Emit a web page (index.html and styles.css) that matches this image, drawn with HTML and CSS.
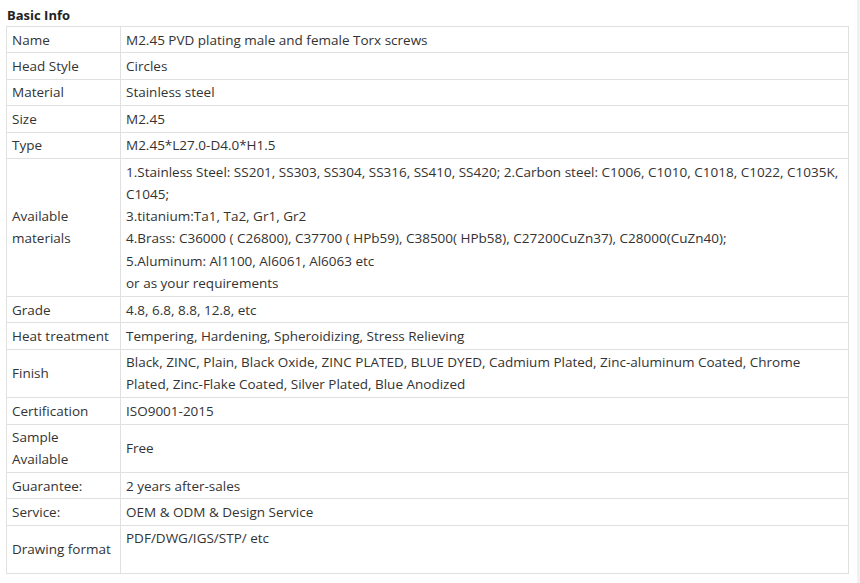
FILE: index.html
```html
<!DOCTYPE html>
<html lang="en">
<head>
<meta charset="utf-8">
<title>Basic Info</title>
<link rel="stylesheet" href="styles.css">
</head>
<body>
<div class="page">
  <div class="content">
    <h3 class="title">Basic Info</h3>
    <table class="spec">
      <tbody>
        <tr><td class="k">Name</td><td class="v">M2.45 PVD plating male and female Torx screws</td></tr>
        <tr><td class="k">Head Style</td><td class="v">Circles</td></tr>
        <tr><td class="k">Material</td><td class="v">Stainless steel</td></tr>
        <tr><td class="k">Size</td><td class="v">M2.45</td></tr>
        <tr><td class="k">Type</td><td class="v">M2.45*L27.0-D4.0*H1.5</td></tr>
        <tr class="tall"><td class="k">Available materials</td><td class="v">1.Stainless Steel: SS201, SS303, SS304, SS316, SS410, SS420; 2.Carbon steel: C1006, C1010, C1018, C1022, C1035K, C1045;<br>3.titanium:Ta1, Ta2, Gr1, Gr2<br>4.Brass: C36000 ( C26800), C37700 ( HPb59), C38500( HPb58), C27200CuZn37), C28000(CuZn40);<br>5.Aluminum: Al1100, Al6061, Al6063 etc<br>or as your requirements</td></tr>
        <tr><td class="k">Grade</td><td class="v">4.8, 6.8, 8.8, 12.8, etc</td></tr>
        <tr><td class="k">Heat treatment</td><td class="v">Tempering, Hardening, Spheroidizing, Stress Relieving</td></tr>
        <tr><td class="k">Finish</td><td class="v">Black, ZINC, Plain, Black Oxide, ZINC PLATED, BLUE DYED, Cadmium Plated, Zinc-aluminum Coated, Chrome Plated, Zinc-Flake Coated, Silver Plated, Blue Anodized</td></tr>
        <tr><td class="k">Certification</td><td class="v">ISO9001-2015</td></tr>
        <tr><td class="k">Sample Available</td><td class="v">Free</td></tr>
        <tr><td class="k">Guarantee:</td><td class="v">2 years after-sales</td></tr>
        <tr><td class="k">Service:</td><td class="v">OEM &amp; ODM &amp; Design Service</td></tr>
        <tr><td class="k">Drawing format</td><td class="v top">PDF/DWG/IGS/STP/ etc<br>&nbsp;</td></tr>
      </tbody>
    </table>
  </div>
  <div class="scroll"></div>
</div>
</body>
</html>
```
FILE: styles.css
```css
html, body {
  margin: 0;
  padding: 0;
  background: #ffffff;
}
body {
  font-family: "Open Sans", "Noto Sans", sans-serif;
  color: #333333;
}
.page {
  display: flex;
  width: 860px;
  height: 583px;
}
.content {
  flex: 1;
  padding: 6px 0 0 6px;
}
.title {
  margin: 0;
  font-size: 13px;
  font-weight: 700;
  line-height: 18px;
  color: #222222;
  padding-left: 1px;
  height: 20px;
}
.spec {
  border-collapse: collapse;
  width: 843px;
  font-size: 13.5px;
  line-height: 22px;
  border: 1px solid #cfcfcf;
}
.spec td {
  border: 1px solid #e0e0e0;
  padding: 1.7px 5px;
  vertical-align: middle;
}
.spec .tall td {
  line-height: 22.3px;
}
.spec .k {
  width: 103px;
}
.spec .v.top {
  vertical-align: top;
}
.scroll {
  width: 3px;
  background: #f1f1f1;
}
```
